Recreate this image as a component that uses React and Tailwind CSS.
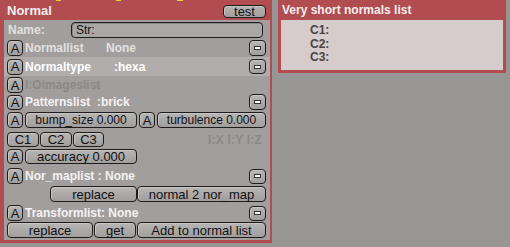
import React from "react";

const font = { fontFamily: '"Liberation Sans", Arial, sans-serif' };

function Btn({ children, className = "" }) {
  return (
    <div
      className={`flex items-center justify-center rounded-[4px] border border-[#1e1c1c] bg-gradient-to-b from-[#b8b5b5] to-[#a19e9e] text-[12px] leading-none text-[#111] shadow-[inset_1px_1px_0_#c8c5c5] ${className}`}
    >
      {children}
    </div>
  );
}

function ABtn({ className = "h-[16px]" }) {
  return <Btn className={`w-[16px] shrink-0 text-[13px] ${className}`}>A</Btn>;
}

function Minus({ className = "h-[16px]" }) {
  return (
    <Btn className={`ml-auto w-[17px] shrink-0 ${className}`}>
      <span className="block w-[7px] h-[4px] bg-white border border-[#333]" />
    </Btn>
  );
}

function Label({ children, className = "text-[#f4f2f2]" }) {
  return (
    <span className={`ml-[2px] text-[12px] font-bold leading-none whitespace-pre ${className}`}>
      {children}
    </span>
  );
}

export default function App() {
  return (
    <div style={font} className="relative w-[510px] h-[247px] bg-[#989595] flex items-start overflow-hidden">
      <span className="absolute top-0 left-[56px] w-[5px] h-[1px] bg-[#e8d23a]" />
      <span className="absolute top-0 left-[116px] w-[5px] h-[1px] bg-[#e8d23a]" />
      <span className="absolute top-0 left-[177px] w-[6px] h-[1px] bg-[#e8d23a]" />

      {/* left panel */}
      <div className="w-[272px] flex flex-col">
        <div className="h-[20px] bg-[#b14c50] flex items-center justify-between pl-[7px] pr-[6px]">
          <span className="text-[13px] font-bold text-[#f6eeee] leading-none">Normal</span>
          <Btn className="w-[43px] h-[13px] mt-[2px] text-[13px]">test</Btn>
        </div>
        <div className="bg-[#a29e9e] border-l-[4px] border-r-[2px] border-b-[3px] border-[#b14c50] flex flex-col pb-[2px]">
          {/* name */}
          <div className="mt-[2px] h-[16px] flex items-center pl-[4px] pr-[7px]">
            <span className="text-[12px] font-bold text-[#e2e0e0] leading-none">Name:</span>
            <div className="ml-auto w-[192px] h-[16px] rounded-[4px] border border-[#1e1c1c] bg-[#aaa7a7] shadow-[inset_1px_1px_0_#888] flex items-center pl-[4px] text-[12px] text-[#111] leading-none">
              Str:
            </div>
          </div>

          <div className="mt-[2px] h-[16px] flex items-center pl-[3px] pr-[4px]">
            <ABtn />
            <Label className="text-[#e2e0e0] w-[79px]">Normallist</Label>
            <Label className="text-[#e2e0e0]">None</Label>
            <Minus />
          </div>

          <div className="mt-[1px] h-[19px] bg-[#b1adad] flex items-center pl-[3px] pr-[4px]">
            <ABtn />
            <Label className="text-white w-[87px]">Normaltype</Label>
            <Label className="text-white">:hexa</Label>
            <Minus className="h-[15px]" />
          </div>

          <div className="mt-[1px] h-[16px] flex items-center pl-[3px] pr-[4px]">
            <ABtn />
            <Label className="text-[#8c8888]">I:Oimageslist</Label>
          </div>

          <div className="mt-[1px] h-[16px] flex items-center pl-[3px] pr-[4px]">
            <ABtn className="h-[15px]" />
            <Label className="text-[#f4f2f2]">Patternslist  :brick</Label>
            <Minus />
          </div>

          <div className="mt-[2px] h-[16px] flex items-center pl-[3px] pr-[4px] gap-[1px]">
            <ABtn />
            <Btn className="ml-[1px] w-[112px] h-[16px]">bump_size 0.000</Btn>
            <ABtn className="ml-[1px] w-[15px] h-[16px]" />
            <Btn className="ml-[1px] flex-1 h-[16px]">turbulence 0.000</Btn>
          </div>

          <div className="mt-[4px] h-[15px] flex items-center pl-[3px] pr-[8px] gap-[1px]">
            <Btn className="w-[32px] h-[15px] text-[13px]">C1</Btn>
            <Btn className="w-[32px] h-[15px] text-[13px]">C2</Btn>
            <Btn className="w-[31px] h-[15px] text-[13px]">C3</Btn>
            <span className="ml-auto text-[12px] font-bold text-[#8c8888] leading-none tracking-[0.2px]">I:X I:Y I:Z</span>
          </div>

          <div className="mt-[2px] h-[15px] flex items-center pl-[3px] pr-[4px]">
            <ABtn className="h-[15px]" />
            <Btn className="ml-[2px] w-[112px] h-[15px] text-[13px]">accuracy 0.000</Btn>
          </div>

          <div className="mt-[4px] h-[16px] flex items-center pl-[3px] pr-[4px]">
            <ABtn />
            <Label>Nor_maplist : None</Label>
            <Minus className="h-[15px]" />
          </div>

          <div className="mt-[2px] h-[16px] flex items-center pl-[46px] pr-[4px]">
            <Btn className="w-[87px] h-[16px] text-[13px]">replace</Btn>
            <Btn className="flex-1 h-[16px] text-[13px]">normal 2 nor_map</Btn>
          </div>

          <div className="mt-[3px] h-[16px] flex items-center pl-[3px] pr-[4px]">
            <ABtn />
            <Label>Transformlist: None</Label>
            <Minus className="h-[15px]" />
          </div>

          <div className="mt-[1px] h-[16px] flex items-center pl-[3px] pr-[4px] gap-[1px]">
            <Btn className="w-[86px] h-[16px] text-[13px]">replace</Btn>
            <Btn className="w-[42px] h-[16px] text-[13px]">get</Btn>
            <Btn className="flex-1 h-[16px] text-[13px]">Add to normal list</Btn>
          </div>
        </div>
      </div>

      {/* right panel */}
      <div className="ml-[6px] w-[228px] flex flex-col">
        <div className="h-[20px] bg-[#b14c50] flex items-center pl-[4px]">
          <span className="text-[12px] font-bold text-[#f6eeee] leading-none">Very short normals list</span>
        </div>
        <div className="h-[53px] bg-[#d6cccc] border-l-[3px] border-r-[3px] border-b-[3px] border-[#b14c50] flex flex-col pl-[29px] pt-[4px]">
          <span className="text-[12px] font-bold text-[#4a4545] leading-[13.5px]">C1:</span>
          <span className="text-[12px] font-bold text-[#4a4545] leading-[13.5px]">C2:</span>
          <span className="text-[12px] font-bold text-[#4a4545] leading-[13.5px]">C3:</span>
        </div>
      </div>
    </div>
  );
}
